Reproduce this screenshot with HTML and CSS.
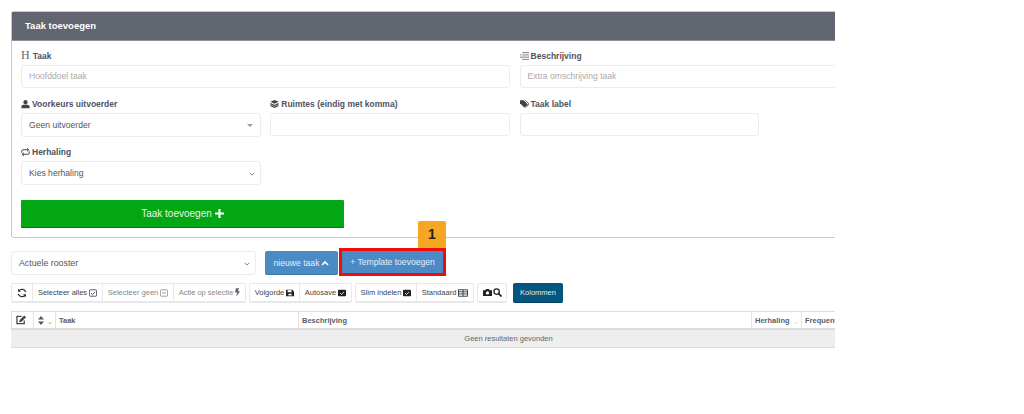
FILE: index.html
```html
<!DOCTYPE html>
<html lang="nl">
<head>
<meta charset="utf-8">
<title>Taak toevoegen</title>
<link rel="stylesheet" href="styles.css">
</head>
<body>
<main class="page">
  <section class="panel">
    <header class="panel-head">Taak toevoegen</header>
    <form class="panel-body">
      <div class="grid">
        <div class="field span2">
          <label class="lbl"><span class="h-ico">H</span> Taak</label>
          <div class="ctl ph">Hoofddoel taak</div>
        </div>
        <div class="field span2">
          <label class="lbl"><svg class="ico" viewBox="0 0 12 12"><path d="M3 1.500h9M3 4.500h9M0 7.500h12M3 10.500h9" stroke="#555" stroke-width="1" fill="none"/><path d="M0 4.500h2" stroke="#555"/></svg> Beschrijving</label>
          <div class="ctl ph">Extra omschrijving taak</div>
        </div>
        <div class="field">
          <label class="lbl"><svg class="ico" viewBox="0 0 12 12"><circle cx="6" cy="3.500" r="2.800" fill="#444"/><path d="M.5 11.500V9.500C.5 7.500 2.500 6.500 6 6.500s5.500 1 5.500 3v2z" fill="#444"/></svg> Voorkeurs uitvoerder</label>
          <div class="ctl sel tall">Geen uitvoerder<span class="caret"></span></div>
        </div>
        <div class="field">
          <label class="lbl"><svg class="ico" viewBox="0 0 12 12"><path d="M6 .5l5.500 2.500L6 5.500.5 3z" fill="#444"/><path d="M.5 5.500L6 8l5.500-2.500M.5 8L6 10.500 11.500 8" stroke="#444" stroke-width="1.600" fill="none"/></svg> Ruimtes (eindig met komma)</label>
          <div class="ctl"></div>
        </div>
        <div class="field">
          <label class="lbl"><svg class="ico" viewBox="0 0 12 12"><path d="M0 1h5l5.500 5.500-4.500 4.500L0 5z" fill="#444"/><path d="M7 1l5 5-4 4.500" stroke="#444" fill="none"/></svg> Taak label</label>
          <div class="ctl"></div>
        </div>
        <div class="field gap-cell"></div>
        <div class="field">
          <label class="lbl"><svg class="ico" viewBox="0 0 12 12"><path d="M1 7V4.500C1 3.500 1.800 3 2.500 3H10M8 1l2.500 2L8 5M11 5v2.500C11 8.500 10.200 9 9.500 9H2M4 7L1.500 9 4 11" stroke="#444" stroke-width="1.300" fill="none"/></svg> Herhaling</label>
          <div class="ctl sel tall">Kies herhaling<svg class="chev" viewBox="0 0 8 5"><path d="M1 1l3 3 3-3" stroke="#666" stroke-width="1.100" fill="none"/></svg></div>
        </div>
      </div>
      <button type="button" class="submit">Taak toevoegen <svg class="plus" viewBox="0 0 10 10"><path d="M5 0v10M0 5h10" stroke="#fff" stroke-width="2.400"/></svg></button>
    </form>
  </section>

  <div class="actions">
    <div class="ctl sel rooster">Actuele rooster<svg class="chev" viewBox="0 0 8 5"><path d="M1 1l3 3 3-3" stroke="#666" stroke-width="1.100" fill="none"/></svg></div>
    <button type="button" class="blue new">nieuwe taak <svg class="up" viewBox="0 0 8 6"><path d="M1 5l3-3 3 3" stroke="#fff" stroke-width="1.600" fill="none"/></svg></button>
    <div class="callout">
      <span class="badge">1</span>
      <button type="button" class="blue tpl">+ Template toevoegen</button>
    </div>
  </div>

  <div class="toolbar">
    <div class="grp">
      <button type="button" class="tb refresh"><svg class="tico" viewBox="0 0 12 12"><path d="M10.500 5A4.600 4.600 0 0 0 2.300 3.500M1.500 7a4.600 4.600 0 0 0 8.200 1.500" stroke="#333" stroke-width="1.500" fill="none"/><path d="M1.200 1v3.600h3.600zM10.800 11V7.400H7.200z" fill="#333"/></svg></button>
      <button type="button" class="tb sel-all">Selecteer alles <svg class="tico" viewBox="0 0 10 10"><rect x=".5" y="1" width="9" height="8" rx="1" fill="none" stroke="#333"/><path d="M2.500 5l2 2 3-3.500" stroke="#333" fill="none"/></svg></button>
      <button type="button" class="tb off sel-none">Selecteer geen <svg class="tico" viewBox="0 0 10 10"><rect x=".5" y="1" width="9" height="8" rx="1" fill="none" stroke="#888"/><path d="M2.500 5h5" stroke="#888"/></svg></button>
      <button type="button" class="tb off act">Actie op selectie <svg class="tico bolt" viewBox="0 0 6 10"><path d="M1 0h4L3.500 3.500H6L1.500 10l1-5H0z" fill="#666"/></svg></button>
    </div>
    <div class="grp">
      <button type="button" class="tb vol">Volgorde <svg class="tico" viewBox="0 0 10 10"><path d="M0 1h8l2 2v6H0z" fill="#222"/><rect x="2" y="1.500" width="5" height="2.500" fill="#fff"/><rect x="3" y="6" width="4" height="2" fill="#fff"/></svg></button>
      <button type="button" class="tb auto">Autosave <svg class="tico" viewBox="0 0 10 10"><rect y="1" width="10" height="8" rx="1" fill="#222"/><path d="M2.500 5l2 2 3-3.500" stroke="#fff" fill="none"/></svg></button>
    </div>
    <div class="grp">
      <button type="button" class="tb slim">Slim indelen <svg class="tico" viewBox="0 0 10 10"><rect y="1" width="10" height="8" rx="1" fill="#222"/><path d="M2.500 5l2 2 3-3.500" stroke="#fff" fill="none"/></svg></button>
      <button type="button" class="tb std">Standaard <svg class="tico wide" viewBox="0 0 12 10"><rect x=".5" y="1" width="11" height="8" fill="none" stroke="#222"/><path d="M.5 3.500h11M.5 6.200h11M6 1v8" stroke="#222"/></svg></button>
    </div>
    <div class="grp">
      <button type="button" class="tb cam"><svg class="tico" viewBox="0 0 10 10"><path d="M0 2.500h2.500L3.500 1h3l1 1.500H10V9H0z" fill="#222"/><circle cx="5" cy="5.500" r="1.800" fill="#fff"/></svg> <svg class="tico" viewBox="0 0 10 10"><circle cx="4" cy="4" r="3" fill="none" stroke="#222" stroke-width="1.400"/><path d="M6 6l3.500 3.500" stroke="#222" stroke-width="1.800"/></svg></button>
    </div>
    <button type="button" class="cols">Kolommen</button>
  </div>

  <div class="table">
    <div class="thead">
      <div class="th c1"><svg class="edit" viewBox="0 0 12 11"><path d="M9 6v3.500H1v-8h5" stroke="#444" stroke-width="1.400" fill="none"/><path d="M4 5.500L9 .5l2 2-5 5-2.500.5z" fill="#444"/></svg></div>
      <div class="th c2"><svg class="updown" viewBox="0 0 6 9"><path d="M0 3.500L3 0l3 3.500zM0 5.500L3 9l3-3.500z" fill="#555"/></svg><span class="sort">⌄</span></div>
      <div class="th c3">Taak</div>
      <div class="th c4">Beschrijving</div>
      <div class="th c5">Herhaling<span class="sort light">⌄</span></div>
      <div class="th c6">Frequentie</div>
    </div>
    <div class="empty">Geen resultaten gevonden</div>
  </div>
</main>
</body>
</html>
```
FILE: styles.css
```css
* { box-sizing: border-box; }
html, body { margin: 0; padding: 0; background: #fff; }
body { width: 1024px; height: 414px; overflow: hidden; font-family: "Liberation Sans", Arial, sans-serif; color: #555; }
.page { width: 835px; height: 414px; overflow: hidden; padding: 11px 0 0 11px; }
button { font-family: inherit; cursor: pointer; }

.panel { width: 1006px; height: 227px; border: 1px solid #c8c8c8; border-radius: 3px; background: #fff; }
.panel-head { height: 29px; background: #61656f; color: #fff; font-size: 9.500px; font-weight: 700; line-height: 27px; padding-left: 13px; border-bottom: 1px solid #8b8e96; }
.panel-body { padding: 5px 9px 0; }
.grid { display: grid; grid-template-columns: repeat(4, 239.700px); column-gap: 9.600px; }
.field { height: 48px; }
.span2 { grid-column: span 2; }
.gap-cell { grid-column: span 1; }
.lbl { display: flex; align-items: center; gap: 2px; height: 19px; font-size: 8.500px; font-weight: 700; color: #4f5360; white-space: nowrap; }
.h-ico { font-family: "Liberation Serif", serif; font-size: 12px; font-weight: 400; margin-right: 1px; color: #666; }
.ico { width: 9px; height: 10px; flex: none; }
.ctl { position: relative; height: 23px; border: 1px solid #ececec; border-radius: 3px; background: #fff; font-size: 8.600px; line-height: 21px; padding-left: 7px; color: #555; }
.ph { color: #aaa; }
.tall { height: 24px; line-height: 22px; }
.caret { position: absolute; right: 7px; top: 10px; border: 3.500px solid transparent; border-top-color: #999; border-bottom-width: 0; }
.chev { position: absolute; right: 5px; top: 10px; width: 6px; height: 4px; }
.submit { display: flex; align-items: center; justify-content: center; gap: 3px; width: 323px; height: 28px; margin-top: 10px; border: 0; border-bottom: 1px solid #067a10; border-radius: 1px; background: #03a613; color: #e8f5e9; font-size: 10px; }
.plus { width: 9px; height: 9px; }

.actions { display: flex; align-items: flex-start; margin-top: 13px; height: 28px; }
.rooster { width: 245px; height: 24px; line-height: 22px; font-size: 8.800px; flex: none; }
.blue { border: 0; background: #4a8ac5; color: #e6eef6; font-size: 8.600px; white-space: nowrap; }
.new { display: flex; align-items: center; justify-content: center; gap: 2px; width: 73px; height: 24px; margin-left: 9px; border-bottom: 1px solid #3a76ad; border-radius: 2px; }
.up { width: 8px; height: 6px; }
.callout { position: relative; margin-left: 1px; margin-top: -3px; }
.tpl { display: block; width: 107px; height: 28px; border: 3px solid #f00c0c; padding: 0; }
.badge { position: absolute; left: 79px; top: -27px; width: 28px; height: 27px; background: #f5a623; border-radius: 2px 2px 0 0; color: #222; font-size: 14px; font-weight: 700; text-align: center; line-height: 27px; }

.toolbar { display: flex; align-items: flex-start; gap: 3px; margin-top: 4px; height: 20px; }
.grp { display: flex; height: 20px; border: 1px solid #e8e8e8; border-bottom-width: 2px; border-radius: 2px; background: #fff; }
.tb { display: flex; align-items: center; justify-content: center; gap: 2px; height: 100%; padding: 0; border: 0; border-right: 1px solid #e8e8e8; background: #fff; color: #444; font-size: 7.500px; white-space: nowrap; }
.tb:last-child { border-right: 0; }
.tb.off { color: #888; }
.tico { width: 8px; height: 8px; flex: none; }
.tico.wide { width: 10px; }
.tico.bolt { width: 5px; height: 9px; }
.refresh { width: 21px; }
.refresh .tico { width: 10px; height: 10px; }
.sel-all { width: 70px; }
.sel-none { width: 71px; }
.act { width: 71px; }
.vol { width: 50px; }
.auto { width: 51px; }
.slim { width: 61px; }
.std { width: 56px; }
.cam { width: 28px; gap: 1px; }
.cam .tico { width: 9px; height: 9px; }
.cols { width: 50px; height: 20px; margin-left: 3px; border: 0; border-bottom: 1px solid #03405f; border-radius: 2px; background: #04567f; color: #dfeaf0; font-size: 7.500px; padding: 0; }

.table { width: 995px; margin-top: 8px; font-size: 7.500px; }
.thead { display: flex; height: 19px; border: 1px solid #dcdcdc; border-width: 1px 1px 2px 1px; }
.th { display: flex; align-items: center; height: 100%; padding-left: 3px; border-right: 1px solid #e2e2e2; color: #5a5e6a; font-weight: 700; white-space: nowrap; flex: none; overflow: hidden; }
.c1 { width: 22px; padding-left: 4px; }
.c2 { width: 22px; padding-left: 4px; }
.c3 { width: 243px; }
.c4 { width: 453px; }
.c5 { width: 50px; }
.c6 { width: 100px; border-right: 0; }
.edit { width: 11px; height: 10px; }
.updown { width: 6px; height: 9px; }
.sort { margin-left: 3px; font-size: 7px; font-weight: 400; line-height: 1; color: #999; padding-top: 3px; }
.sort.light { color: #ccc; }
.empty { height: 18px; background: #eee; border-bottom: 1px solid #dcdcdc; font-size: 7.500px; line-height: 18px; text-align: center; color: #666; }
```
